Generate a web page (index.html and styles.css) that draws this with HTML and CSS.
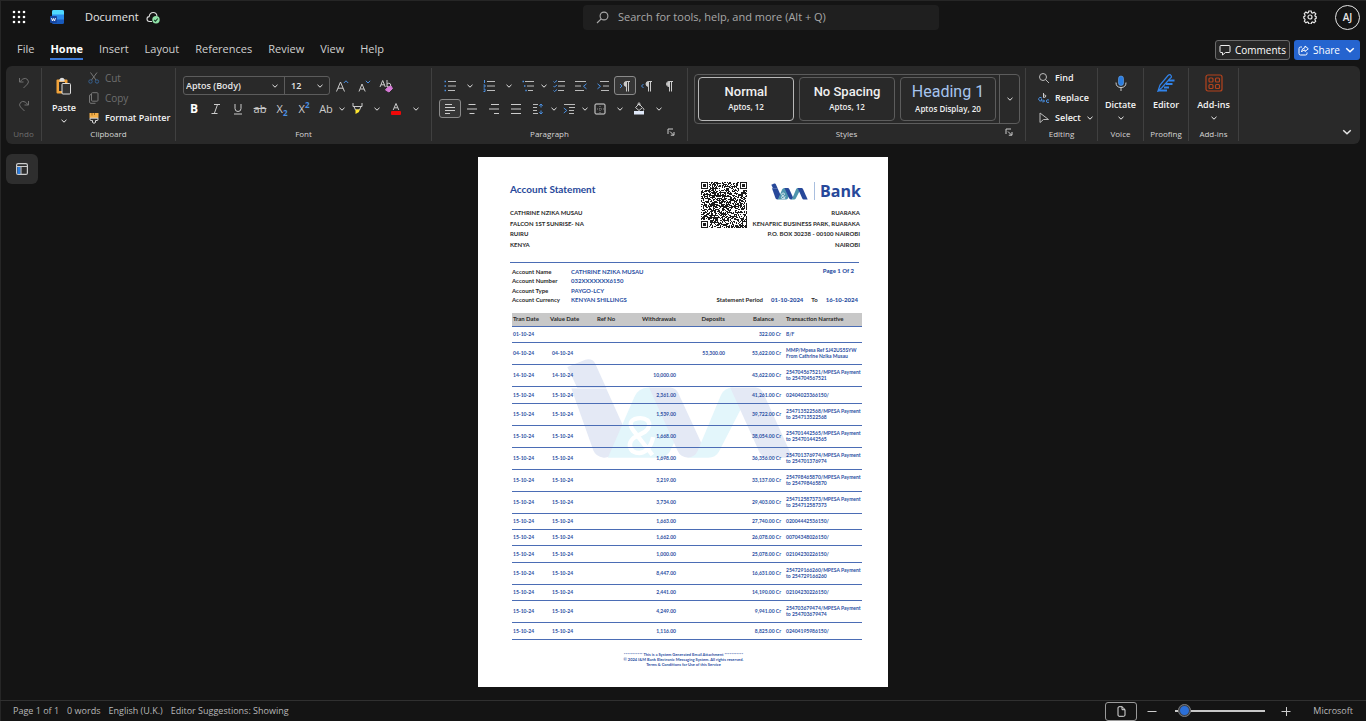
FILE: index.html
```html
<!DOCTYPE html>
<html lang="en">
<head>
<meta charset="utf-8">
<meta name="viewport" content="width=device-width, initial-scale=1">
<title>Document</title>
<link rel="stylesheet" href="styles.css">
</head>
<body>
<svg class="defs" aria-hidden="true">
  <symbol id="chev" viewBox="0 0 8 8"><path d="M1.5 2.8 4 5.2 6.5 2.8" fill="none" stroke="currentColor" stroke-width="1"/></symbol>
  <symbol id="launch" viewBox="0 0 8 8"><path d="M1 6V1h5M3 3.5v0l3.5 3.5M7 4v3.2H3.8" fill="none" stroke="currentColor"/></symbol>
  <symbol id="imark" viewBox="260 155 690 310">
    <path class="m-dark" d="M266 185 320 163Q342 158 350 175L383 248H296Z"/>
    <path class="m-dark" d="M278 250H383L435 365 405 445Q395 459 375 458 352 456 344 436Z"/>
    <path class="m-light" d="M388 458 468 275Q480 248 510 247 530 248 540 262L594 400 574 440Q564 458 540 458Z"/>
    <path class="m-dark" d="M512 247H575Q592 248 600 264L672 420 662 440Q652 458 630 458 606 456 598 438Z"/>
    <path class="m-light" d="M628 458Q650 456 658 438L728 270Q738 248 765 247L794 300 722 440Q712 458 690 458Z"/>
    <path class="m-dark" d="M756 247H832Q848 248 856 264L944 458H868Q852 458 844 442Z"/>
    <path class="m-amp" d="M522 450 466 378Q446 352 468 342 492 334 508 346 520 362 500 380L466 398Q444 418 462 438 486 452 506 434 520 418 524 396" fill="none" stroke-width="13"/>
  </symbol>
</svg>
<div class="app">
  <header class="topbar">
    <div class="brand">
      <button class="plain" aria-label="App launcher"><svg width="14" height="14" viewBox="0 0 14 14" fill="#fff"><circle cx="2" cy="2" r="1.3"/><circle cx="7" cy="2" r="1.3"/><circle cx="12" cy="2" r="1.3"/><circle cx="2" cy="7" r="1.3"/><circle cx="7" cy="7" r="1.3"/><circle cx="12" cy="7" r="1.3"/><circle cx="2" cy="12" r="1.3"/><circle cx="7" cy="12" r="1.3"/><circle cx="12" cy="12" r="1.3"/></svg></button>
      <svg class="word" width="14" height="14" viewBox="0 0 14 14"><rect x="2" y="0" width="12" height="14" rx="1.5" fill="#185abd"/><path d="M2 5V1.5Q2 0 3.500 0H12.500Q14 0 14 1.500V5Z" fill="#50d9ff"/><path d="M2 4.500H14V9.500H2Z" fill="#2b8cec"/><rect x="0" y="6" width="7" height="7" rx="1" fill="#1746a0"/><path d="M1.500 8 2.500 11 3.500 8.500 4.500 11 5.500 8" fill="none" stroke="#fff" stroke-width=".9"/></svg>
      <span class="doc-name">Document</span>
      <svg width="14" height="13" viewBox="0 0 14 13"><path d="M6 10.500H3.500Q1 10.300 1 8 1 5.800 3.200 5.600 3.700 1.500 7.200 1.500 10.500 1.500 11 5.200" fill="none" stroke="#ddd" stroke-width="1.100"/><circle cx="10" cy="8.800" r="3.700" fill="#8fe0a6"/><path d="M8.200 9 9.500 10.200 11.800 7.500" fill="none" stroke="#17402a" stroke-width="1.100"/></svg>
    </div>
    <label class="search"><svg width="13" height="13" viewBox="0 0 13 13" fill="none" stroke="#aaa" stroke-width="1.1"><circle cx="8" cy="5" r="3.900"/><path d="M5.200 7.800 1 12"/></svg><input type="text" aria-label="Search" placeholder="Search for tools, help, and more (Alt + Q)"></label>
    <div class="account">
      <button class="plain" aria-label="Settings"><svg width="14" height="14" viewBox="0 0 14 14" fill="none" stroke="#e6e6e6" stroke-width="1.200"><path d="M5.800 1h2.400l.4 1.700 1 .4 1.500-.9 1.700 1.700-.9 1.500.4 1 .9.300v1.600l-1 .5-.3.900.8 1.500-1.600 1.600-1.500-.8-1 .4-.4 1.600H5.800l-.4-1.600-1-.4-1.500.8-1.600-1.600.8-1.500-.4-.9L.800 8.200V6.600l1-.4.300-1-.8-1.500 1.600-1.600 1.500.9 1-.4Z"/><circle cx="7" cy="7" r="2"/></svg></button>
      <button class="avatar">AJ</button>
    </div>
  </header>

  <nav class="tabs">
    <a href="#">File</a><a href="#" class="on">Home</a><a href="#">Insert</a><a href="#">Layout</a><a href="#">References</a><a href="#">Review</a><a href="#">View</a><a href="#">Help</a>
    <div class="actions">
      <button class="comments"><svg width="12" height="12" viewBox="0 0 12 12" fill="none" stroke="#eee"><path d="M2 1.500h8q1 0 1 1v5q0 1-1 1H6.500L3.500 11V8.500H2q-1 0-1-1v-5q0-1 1-1Z"/></svg>Comments</button>
      <button class="share"><svg width="11" height="11" viewBox="0 0 11 11" fill="none" stroke="#fff"><path d="M4 2H2.500Q1 2 1 3.500v5Q1 10 2.500 10h5Q9 10 9 8.500V7.500M7 1l3.300 2.800L7 6.500V5Q4.500 5 3.500 7 3.700 3 7 2.600Z"/></svg>Share<svg class="chev12"><use href="#chev"/></svg></button>
    </div>
  </nav>

  <section class="ribbon" aria-label="Home">
    <div class="group g-undo">
      <div class="undo">
        <button class="plain" aria-label="Undo"><svg width="12" height="12" viewBox="0 0 12 12" fill="none" stroke="#707070"><path d="M1.500 1v4h4M1.800 4.800 4.800 2Q7.500.5 9.500 2.500q2 2.500 0 4.500L5.500 11"/></svg></button>
        <button class="plain" aria-label="Redo"><svg width="12" height="12" viewBox="0 0 12 12" fill="none" stroke="#707070"><path d="M10.500 1v4h-4M10.200 4.800 7.200 2Q4.500.5 2.500 2.500q-2 2.500 0 4.500L6.500 11"/></svg></button>
      </div>
      <div class="glabel dim">Undo</div>
    </div>
    <div class="group g-clip">
      <div class="clip">
        <button class="big"><svg width="18" height="18" viewBox="0 0 18 18"><rect x="1.500" y="2.500" width="11" height="14" rx="1" fill="#f2a33a"/><path d="M4.500 4.500V2.500Q5 .8 7 .8t2.500 1.700v2Z" fill="#ddd"/><rect x="4" y="5" width="6" height="9" fill="#292929"/><rect x="7" y="6.500" width="8.500" height="10.500" rx="1" fill="#333" stroke="#ddd"/></svg><span>Paste</span><svg class="chev8"><use href="#chev"/></svg></button>
        <div class="clip-list">
          <button class="item dim"><svg width="12" height="12" viewBox="0 0 12 12" fill="none" stroke="#777"><path d="M2.500.5 8 8M9 .5 3.500 8"/><g stroke="#38618f"><circle cx="2.500" cy="9.500" r="1.700"/><circle cx="9" cy="9.500" r="1.700"/></g></svg>Cut</button>
          <button class="item dim"><svg width="12" height="12" viewBox="0 0 12 12" fill="none" stroke="#777"><rect x="3.500" y=".7" width="6.500" height="8.500" rx="1"/><path d="M3 2.500Q1.500 2.500 1.500 4v6q0 1.300 1.500 1.300h4.500"/></svg>Copy</button>
          <button class="item bold"><svg width="12" height="12" viewBox="0 0 12 12"><path d="M1.500 1h9v5h-9Z" fill="#f5b04a"/><path d="M4 1v2.500M6.500 1v2" stroke="#8a5a18" stroke-width=".8"/><path d="M2 6.200V7.500Q2 8.500 3.200 8.500H4.500V10.500Q6 12 7.500 10.500V8.500H9Q10 8.500 10 7.500V6.200Z" fill="none" stroke="#ddd"/></svg>Format Painter</button>
        </div>
      </div>
      <div class="glabel">Clipboard</div>
    </div>
    <div class="group g-font">
      <div class="rows">
        <div class="row">
          <div class="combos">
            <div class="combo c-name"><select aria-label="Font"><option>Aptos (Body)</option></select><svg class="chev8"><use href="#chev"/></svg></div>
            <div class="combo c-size"><select aria-label="Font size"><option>12</option></select><svg class="chev8"><use href="#chev"/></svg></div>
          </div>
          <button class="ib" aria-label="Grow font"><svg width="14" height="14" viewBox="0 0 14 14" fill="none" stroke="#ccc"><path d="M1.500 12.500 5.500 3l4 9.500M3 9.200h5"/><path d="M8.800 4 11 1.800 13.200 4" stroke="#4a90e2"/></svg></button>
          <button class="ib" aria-label="Shrink font"><svg width="14" height="14" viewBox="0 0 14 14" fill="none" stroke="#ccc"><path d="M2 12.500 5 5l3.200 7.500M3.300 10h3.700"/><path d="M8.800 1.800 11 4l2.200-2.200" stroke="#4a90e2"/></svg></button>
          <button class="ib" aria-label="Clear formatting"><svg width="14" height="14" viewBox="0 0 14 14" fill="none" stroke="#ccc"><path d="M1 8 3.700 1.500 6.300 8M2 5.800h3.500M8 1v7M8 5q2-1.800 3.500 0 .8 2.500-1 3-1.500.2-2.500-1"/><path d="M8.500 8.500 12 7l1.500 2.500L10 13 6.500 11Z" fill="#d67ad6" stroke="#d67ad6"/></svg></button>
        </div>
        <div class="row">
          <button class="ib t-b">B</button>
          <button class="ib" aria-label="Italic"><svg width="12" height="12" viewBox="0 0 12 12" fill="none" stroke="#ccc"><path d="M4 1.500h6M1.500 10.500h6M7.500 1.500 4.300 10.500"/></svg></button>
          <button class="ib" aria-label="Underline"><svg width="12" height="12" viewBox="0 0 12 12" fill="none" stroke="#ccc"><path d="M3 1v4.500Q3 8.500 6 8.500T9 5.500V1M2 11h8"/></svg></button>
          <button class="ib t-s">ab</button>
          <button class="ib t-x">X<sub>2</sub></button>
          <button class="ib t-x">X<sup>2</sup></button>
          <button class="ib t-n">Ab</button><button class="cv n" aria-label="Change case"><svg class="chev8"><use href="#chev"/></svg></button>
          <button class="ib" aria-label="Highlight"><svg width="13" height="13" viewBox="0 0 13 13"><path d="M2 1v3.500h9V1M3 4.500 4.500 8h4L10 4.500" fill="none" stroke="#ccc"/><path d="M4.500 7.500h4.200L8 10l-3.500 2Z" fill="#ffe62e"/></svg></button><button class="cv" aria-label="Highlight colours"><svg class="chev8"><use href="#chev"/></svg></button>
          <button class="ib" aria-label="Font colour"><svg width="12" height="13" viewBox="0 0 12 13"><path d="M3.200 8 6 1.500 8.800 8M4.200 5.800h3.600" fill="none" stroke="#ccc"/><rect x="1" y="9" width="10" height="4" rx="1" fill="#f00808"/></svg></button><button class="cv" aria-label="Font colours"><svg class="chev8"><use href="#chev"/></svg></button>
        </div>
      </div>
      <div class="glabel">Font</div>
    </div>
    <div class="group g-para">
      <div class="rows">
        <div class="row">
          <button class="ib" aria-label="Bullets"><svg width="12" height="12" viewBox="0 0 12 12" stroke="#bbb" fill="none"><path d="M4 1.500h8M4 6h8M4 10.500h7"/><path d="M.500 1.500h1.500M.500 6h1.500M.500 10.500h1.500" stroke="#4a90e2" stroke-width="1.500"/></svg></button><button class="cv" aria-label="Bullet styles"><svg class="chev8"><use href="#chev"/></svg></button>
          <button class="ib" aria-label="Numbering"><svg width="12" height="12" viewBox="0 0 12 12" stroke="#bbb" fill="none"><path d="M4 1.500h8M4 6h8M4 10.500h8"/><path d="M1.500 0v3M.5 5h1.500v2H.5M.5 9h1.500v2.500H.5" stroke="#4a90e2"/></svg></button><button class="cv" aria-label="Numbering styles"><svg class="chev8"><use href="#chev"/></svg></button>
          <button class="ib" aria-label="Multilevel list"><svg width="12" height="12" viewBox="0 0 12 12" stroke="#bbb" fill="none"><path d="M3 1.500h9M5 6h7M6 10.500h5"/><path d="M.5 1.500h1.500M2 6h1.500M3.300 10.500h1.500" stroke="#4a90e2" stroke-width="1.500"/></svg></button><button class="cv n" aria-label="Multilevel styles"><svg class="chev8"><use href="#chev"/></svg></button>
          <button class="ib" aria-label="Checklist"><svg width="12" height="12" viewBox="0 0 12 12" stroke="#bbb" fill="none"><path d="M5 1.500h7M5 6h7M5 10.500h6"/><path d="m.5 1.500 1 1L4 .5M.5 6l1 1L4 5M.5 10.500l1 1 2.500-2" stroke="#4a90e2"/></svg></button>
          <button class="ib" aria-label="Decrease indent"><svg width="12" height="12" viewBox="0 0 12 12" stroke="#bbb" fill="none"><path d="M0 1.500h11M0 6h6M0 10.500h9"/><path d="M11.500 3.800 8.500 6.300l3 2.500" stroke="#4a90e2"/></svg></button>
          <button class="ib" aria-label="Increase indent"><svg width="12" height="12" viewBox="0 0 12 12" stroke="#bbb" fill="none"><path d="M3 1.500h9M6 6h6M4 10.500h8"/><path d="M.5 3.800 3.500 6.300l-3 2.500" stroke="#4a90e2"/></svg></button>
          <button class="ib sel" aria-label="Left to right"><svg width="12" height="12" viewBox="0 0 12 12" stroke="#ccc" fill="none"><path d="M11 1.500H7.500Q5 1.500 5 4t3 2.500M7.500 1.500v10M9.500 1.500v10"/><path d="M6.500 2h1v4h-1Q5.500 5 5.500 4t1-2Z" fill="#ccc"/><path d="m1 4 2 2-2 2" stroke="#4a90e2"/></svg></button>
          <button class="ib" aria-label="Right to left"><svg width="12" height="12" viewBox="0 0 12 12" stroke="#ccc" fill="none"><path d="M11 1.500H7.500Q5 1.500 5 4t3 2.500M7.500 1.500v10M9.500 1.500v10"/><path d="M6.500 2h1v4h-1Q5.500 5 5.500 4t1-2Z" fill="#ccc"/><path d="m2.500 4-2 2 2 2" stroke="#4a90e2"/></svg></button>
          <button class="ib" aria-label="Show marks"><svg width="12" height="12" viewBox="0 0 12 12" stroke="#ccc" fill="none"><path d="M10 1.500H6Q3.500 1.500 3.500 4T6 6.500M6.500 1.500v10M8.500 1.500v10"/><path d="M5.500 2h1v4h-1Q4.500 5 4.500 4t1-2Z" fill="#ccc"/></svg></button>
        </div>
        <div class="row">
          <button class="ib sel" aria-label="Align left"><svg width="12" height="12" viewBox="0 0 12 12" stroke="#ccc"><path d="M1 1.500h7M1 4.500h10M1 7.500h10M1 10.500h5"/></svg></button>
          <button class="ib" aria-label="Centre"><svg width="12" height="12" viewBox="0 0 12 12" stroke="#ccc"><path d="M2.500 1.500h7M1 6h10M3.500 10.500h5"/></svg></button>
          <button class="ib" aria-label="Align right"><svg width="12" height="12" viewBox="0 0 12 12" stroke="#ccc"><path d="M3 1.500h8M1 6h10M6 10.500h5"/></svg></button>
          <button class="ib" aria-label="Justify"><svg width="12" height="12" viewBox="0 0 12 12" stroke="#ccc"><path d="M1 1.500h10M1 6h10M1 10.500h10"/></svg></button>
          <button class="ib" aria-label="Line spacing"><svg width="12" height="12" viewBox="0 0 12 12" stroke="#bbb" fill="none"><path d="M1 1.500h5M1 4.500h4M1 7.500h4M1 10.500h5"/><path d="M9 1v3.500M7.300 2.700 9 1l1.700 1.700M9 11V7.500M7.300 9.300 9 11l1.700-1.700" stroke="#4a90e2"/></svg></button><button class="cv n" aria-label="Spacing options"><svg class="chev8"><use href="#chev"/></svg></button>
          <button class="ib" aria-label="Special indent"><svg width="12" height="12" viewBox="0 0 12 12" stroke="#bbb" fill="none"><path d="M1 1.500h11M6 4.500h6M6 7.500h5M6 10.500h5"/><path d="m.8 5 3 2.500-3 2.500" stroke="#4a90e2"/></svg></button><button class="cv n" aria-label="Indent options"><svg class="chev8"><use href="#chev"/></svg></button>
          <button class="ib" aria-label="Borders"><svg width="12" height="12" viewBox="0 0 12 12" fill="none"><rect x="1" y="1" width="10" height="10" rx="1" stroke="#ddd"/><path d="M6 1v10M1 6h10" stroke="#888" stroke-dasharray="1 1"/></svg></button><button class="cv" aria-label="Border styles"><svg class="chev8"><use href="#chev"/></svg></button>
          <button class="ib" aria-label="Shading"><svg width="12" height="13" viewBox="0 0 12 13" fill="none" stroke="#ccc"><path d="M2.500 5.500 6 2l3.500 3.500L6 8.500ZM5 3V1.500Q6 0 7 1.500V4M10 6q1.500 1.500.5 2.500"/><rect x="1.500" y="9.500" width="9" height="2.500" fill="#dfe8f8" stroke="#dfe8f8"/></svg></button><button class="cv" aria-label="Shading colours"><svg class="chev8"><use href="#chev"/></svg></button>
        </div>
      </div>
      <div class="glabel with-launch"><span>Paragraph</span><button class="plain" aria-label="Paragraph settings"><svg class="launch"><use href="#launch"/></svg></button></div>
    </div>
    <div class="group g-styles">
      <div class="gallery">
        <button class="card on"><span class="s-name">Normal</span><span class="s-font">Aptos, 12</span></button>
        <button class="card"><span class="s-name">No Spacing</span><span class="s-font">Aptos, 12</span></button>
        <button class="card"><span class="s-name s-head">Heading 1</span><span class="s-font">Aptos Display, 20</span></button>
        <button class="more" aria-label="More styles"><svg class="chev8"><use href="#chev"/></svg></button>
      </div>
      <div class="glabel with-launch"><span>Styles</span><button class="plain" aria-label="Style settings"><svg class="launch"><use href="#launch"/></svg></button></div>
    </div>
    <div class="group g-edit">
      <div class="edit-list">
        <button class="item bold"><svg width="12" height="12" viewBox="0 0 12 12" fill="none" stroke="#bbb"><circle cx="5" cy="5" r="3.500"/><path d="m7.500 7.500 3.500 3.500"/></svg>Find</button>
        <button class="item bold"><svg width="12" height="12" viewBox="0 0 12 12" fill="none" stroke="#4a90e2"><path d="M5.500 1v4.500M5.500 3.500q1-1 2.300 0 .5 2-2.300 2" stroke="#ccc"/><path d="M3.500 5.500H1.500Q.5 6 .8 8q1 2 2.700.5V6.500M3.500 9h3M5 7.500 6.500 9 5 10.500M11 8q-2.500-1-2.700 1 .2 2.300 2.700 1.300"/></svg>Replace</button>
        <button class="item bold"><svg width="12" height="12" viewBox="0 0 12 12" fill="none" stroke="#bbb"><path d="M2 1v9.500L5.500 7.500h5Z"/></svg>Select<svg class="chev8"><use href="#chev"/></svg></button>
      </div>
      <div class="glabel">Editing</div>
    </div>
    <div class="group g-voice">
      <button class="big"><svg width="18" height="18" viewBox="0 0 18 18" fill="none"><rect x="6.500" y="2" width="5" height="9.500" rx="2.500" fill="#2b7de0" stroke="#6aa8f0" stroke-width=".6"/><path d="M4 8.500q0 5 5 5t5-5M9 13.500V17" stroke="#ccc"/></svg><span>Dictate</span><svg class="chev8"><use href="#chev"/></svg></button>
      <div class="glabel">Voice</div>
    </div>
    <div class="group g-proof">
      <button class="big"><svg width="20" height="18" viewBox="0 0 20 18" fill="none" stroke="#3183ea"><path d="M2 17 4 11 12 1.500Q14-.3 15 1.500T14.500 4L6 13.500Z" stroke-width="1.200"/><path d="M12.500 6.500h6M10 10h6.500M8 13.500h5M2 16.500h9" stroke-width="2"/></svg><span>Editor</span></button>
      <div class="glabel">Proofing</div>
    </div>
    <div class="group g-add">
      <button class="big"><svg width="18" height="18" viewBox="0 0 18 18" fill="none" stroke="#b5431d" stroke-width="1.200"><rect x="1" y="1" width="16" height="16" rx="2"/><rect x="4" y="4" width="4" height="4" rx="1"/><rect x="10.500" y="4" width="4" height="4" rx="1"/><rect x="4" y="10.500" width="4" height="4" rx="1"/><rect x="10.500" y="10.500" width="4" height="4" rx="1"/></svg><span>Add-ins</span><svg class="chev8"><use href="#chev"/></svg></button>
      <div class="glabel">Add-ins</div>
    </div>
    <button class="plain collapse" aria-label="Collapse ribbon"><svg class="chev12"><use href="#chev"/></svg></button>
  </section>

  <main class="canvas">
    <button class="pane" aria-label="Navigation pane"><svg width="12" height="12" viewBox="0 0 12 12" fill="none"><rect x=".6" y=".6" width="10.800" height="10.800" rx="1.500" stroke="#ccc" stroke-width="1.200"/><path d="M1 3.500h10" stroke="#ccc"/><rect x="1.500" y="4" width="3" height="7" fill="#2b7de0"/><path d="M5 4v7" stroke="#ccc"/></svg></button>
    <article class="page">
      <svg class="watermark" aria-hidden="true"><use href="#imark"/></svg>
      <div class="head">
        <div class="head-l">
          <h1>Account Statement</h1>
          <div class="addr"><span>CATHRINE NZIKA MUSAU</span><span>FALCON 1ST SUNRISE- NA</span><span>RUIRU</span><span>KENYA</span></div>
        </div>
        <svg class="qr" id="qr" viewBox="0 0 46 46" shape-rendering="crispEdges" role="img" aria-label="QR code"></svg>
        <div class="head-r">
          <div class="logo"><svg class="mark"><use href="#imark"/></svg><span>Bank</span></div>
          <div class="addr"><span>RUARAKA</span><span>KENAFRIC BUSINESS PARK, RUARAKA</span><span>P.O. BOX 30238 - 00100 NAIROBI</span><span>NAIROBI</span></div>
        </div>
      </div>
      <div class="info">
        <dl><dt>Account Name</dt><dd>CATHRINE NZIKA MUSAU</dd><dt>Account Number</dt><dd>032XXXXXXX6150</dd><dt>Account Type</dt><dd>PAYGO-LCY</dd><dt>Account Currency</dt><dd>KENYAN SHILLINGS</dd></dl>
        <div class="period"><b>Page 1 Of 2</b><p><span>Statement Period</span><b>01-10-2024</b><span>To</span><b>16-10-2024</b></p></div>
      </div>
      <table class="tx">
        <colgroup><col class="k1"><col class="k2"><col class="k3"><col class="k4"><col class="k5"><col class="k6"><col></colgroup>
        <thead><tr><th>Tran Date</th><th>Value Date</th><th>Ref No</th><th class="r">Withdrawals</th><th class="r">Deposits</th><th class="r bal">Balance</th><th class="nar">Transaction Narrative</th></tr></thead>
        <tbody>
          <tr><td>01-10-24</td><td></td><td></td><td class="r"></td><td class="r"></td><td class="r">322.00 Cr</td><td class="nar">B/F</td></tr>
          <tr class="tall"><td>04-10-24</td><td class="v">04-10-24</td><td></td><td class="r"></td><td class="r">53,300.00</td><td class="r">53,622.00 Cr</td><td class="nar">MMP/Mpesa Ref SJ42US5SYW<br>From Cathrine Nzika Musau</td></tr>
          <tr class="tall"><td>14-10-24</td><td class="v">14-10-24</td><td></td><td class="r">10,000.00</td><td></td><td class="r">43,622.00 Cr</td><td class="nar">254704567521/MPESA Payment<br>to 254704567521</td></tr>
          <tr><td>15-10-24</td><td class="v">15-10-24</td><td></td><td class="r">2,361.00</td><td></td><td class="r">41,261.00 Cr</td><td class="nar">02404023366150/</td></tr>
          <tr class="tall"><td>15-10-24</td><td class="v">15-10-24</td><td></td><td class="r">1,539.00</td><td></td><td class="r">39,722.00 Cr</td><td class="nar">254713522568/MPESA Payment<br>to 254713522568</td></tr>
          <tr class="tall"><td>15-10-24</td><td class="v">15-10-24</td><td></td><td class="r">1,668.00</td><td></td><td class="r">38,054.00 Cr</td><td class="nar">254701442565/MPESA Payment<br>to 254701442565</td></tr>
          <tr class="tall"><td>15-10-24</td><td class="v">15-10-24</td><td></td><td class="r">1,698.00</td><td></td><td class="r">36,356.00 Cr</td><td class="nar">254701376974/MPESA Payment<br>to 254701376974</td></tr>
          <tr class="tall"><td>15-10-24</td><td class="v">15-10-24</td><td></td><td class="r">3,219.00</td><td></td><td class="r">33,137.00 Cr</td><td class="nar">254798465870/MPESA Payment<br>to 254798465870</td></tr>
          <tr class="tall"><td>15-10-24</td><td class="v">15-10-24</td><td></td><td class="r">3,734.00</td><td></td><td class="r">29,403.00 Cr</td><td class="nar">254712587373/MPESA Payment<br>to 254712587373</td></tr>
          <tr><td>15-10-24</td><td class="v">15-10-24</td><td></td><td class="r">1,663.00</td><td></td><td class="r">27,740.00 Cr</td><td class="nar">02004442536150/</td></tr>
          <tr><td>15-10-24</td><td class="v">15-10-24</td><td></td><td class="r">1,662.00</td><td></td><td class="r">26,078.00 Cr</td><td class="nar">00704348026150/</td></tr>
          <tr><td>15-10-24</td><td class="v">15-10-24</td><td></td><td class="r">1,000.00</td><td></td><td class="r">25,078.00 Cr</td><td class="nar">02104230226150/</td></tr>
          <tr class="tall"><td>15-10-24</td><td class="v">15-10-24</td><td></td><td class="r">8,447.00</td><td></td><td class="r">16,631.00 Cr</td><td class="nar">254729166260/MPESA Payment<br>to 254729166260</td></tr>
          <tr><td>15-10-24</td><td class="v">15-10-24</td><td></td><td class="r">2,441.00</td><td></td><td class="r">14,190.00 Cr</td><td class="nar">02104230226150/</td></tr>
          <tr class="tall"><td>15-10-24</td><td class="v">15-10-24</td><td></td><td class="r">4,249.00</td><td></td><td class="r">9,941.00 Cr</td><td class="nar">254703679474/MPESA Payment<br>to 254703679474</td></tr>
          <tr><td>15-10-24</td><td class="v">15-10-24</td><td></td><td class="r">1,116.00</td><td></td><td class="r">8,825.00 Cr</td><td class="nar">02404195986150/</td></tr>
        </tbody>
      </table>
      <footer class="foot">*********** This is a System Generated Email Attachment ***********<br>© 2024 I&amp;M Bank Electronic Messaging System. All rights reserved.<br>Terms &amp; Conditions for Use of this Service</footer>
    </article>
  </main>

  <footer class="status">
    <span>Page 1 of 1</span><span>0 words</span><span>English (U.K.)</span><span>Editor Suggestions: Showing</span>
    <div class="zoom">
      <button class="view" aria-label="Page view"><svg width="9" height="11" viewBox="0 0 9 11" fill="none" stroke="#ddd"><path d="M2 .7h3L8 3.500V9q0 1.300-1.200 1.300H2Q1 10.300 1 9V2Q1 .7 2 .7ZM5 .7v3h3"/></svg></button>
      <button class="plain" aria-label="Zoom out"><svg width="10" height="10" viewBox="0 0 10 10" stroke="#ccc"><path d="M.5 5.500h9"/></svg></button>
      <input type="range" min="0" max="100" value="4" aria-label="Zoom">
      <button class="plain" aria-label="Zoom in"><svg width="10" height="10" viewBox="0 0 10 10" stroke="#ccc"><path d="M.5 5.500h9M5.500 1v9"/></svg></button>
      <span class="ms">Microsoft</span>
    </div>
  </footer>
</div>
<script src="qr.js"></script>
</body>
</html>
```

FILE: styles.css
```css
* { box-sizing: border-box; }
body {
  margin: 0;
  background: #141414;
  color: #e6e6e6;
  font: 11px/14px "Open Sans", "Noto Sans", sans-serif;
}
button, input, select { font: inherit; color: inherit; }
button { background: none; border: 0; padding: 0; display: flex; align-items: center; justify-content: center; }
svg { display: block; flex: none; }
.defs { position: absolute; width: 0; height: 0; }
.app { min-height: 100vh; display: flex; flex-direction: column; box-shadow: inset 1px 1px #262626; }
.chev8 { width: 8px; height: 8px; }
.chev12 { width: 12px; height: 12px; }
.launch { width: 8px; height: 8px; color: #ccc; }

/* title bar */
.topbar { display: grid; grid-template-columns: 583fr 356fr 427fr; align-items: center; height: 34px; }
.brand { display: flex; align-items: center; padding-left: 12px; }
.word { margin: 0 21px 0 24px; }
.doc-name { margin-right: 7px; }
.search { display: flex; align-items: center; gap: 9px; height: 25px; padding: 0 13px; border-radius: 4px; background: #1f1f1f; }
.search input { flex: 1; min-width: 0; padding: 0; border: 0; outline: 0; background: none; }
.search input::placeholder { color: #a8a8a8; opacity: 1; }
.account { display: flex; justify-content: flex-end; align-items: center; gap: 18px; padding-right: 6px; }
.avatar { width: 25px; height: 25px; border: 1px solid #e6e6e6; border-radius: 50%; font-weight: 600; font-size: 10px; }

/* tabs */
.tabs { display: flex; align-items: center; gap: 16px; height: 32px; padding: 0 6px 0 17px; }
.tabs a { color: #d0d0d0; text-decoration: none; padding: 2px 0; border-bottom: 2px solid transparent; }
.tabs .on { color: #fff; font-weight: 700; border-color: #3a78d6; }
.actions { display: flex; gap: 4px; margin-left: auto; font-size: 10px; }
.actions button { height: 20px; border-radius: 3px; gap: 4px; color: #fff; }
.comments { width: 75px; border: 1px solid #6a6a6a; background: #262626; }
.share { width: 66px; background: #2564cf; }

/* ribbon */
.ribbon { display: flex; height: 78px; margin: 0 6px; border-radius: 6px; background: #292929; }
.group { display: flex; flex-direction: column; justify-content: space-between; margin: 2px 0 3px; padding-bottom: 1px; border-right: 1px solid #404040; flex: none; }
.glabel { text-align: center; font-size: 8px; line-height: 12px; color: #d6d6d6; }
.dim { color: #6e6e6e; }
.item.bold { font-weight: 600; font-size: 9px; color: #f4f4f4; }
.with-launch { display: flex; }
.with-launch span { flex: 1; }
.with-launch button { width: 20px; justify-content: flex-start; align-items: flex-start; }
.g-undo { width: 36px; }
.g-clip { width: 134px; }
.g-font, .g-para { width: 256px; }
.g-styles { width: 338px; }
.g-edit { width: 72px; }
.g-voice { width: 46px; }
.g-proof { width: 45px; }
.g-add { width: 50px; }
.undo { display: flex; flex-direction: column; align-items: center; gap: 11px; padding-top: 9px; }
.clip { display: flex; padding-left: 10px; }
.clip-list, .edit-list { display: flex; flex-direction: column; padding-left: 12px; }
.item { justify-content: flex-start; gap: 5px; height: 20px; font-size: 10px; white-space: nowrap; }
.big { flex-direction: column; gap: 4px; font-size: 9px; font-weight: 600; padding-top: 6px; color: #f4f4f4; }
.big svg + span { line-height: 14px; padding-top: 2px; }
.big .chev8 { margin-top: -2px; }
.rows { display: flex; flex-direction: column; gap: 4px; padding: 8px 0 0 7px; }
.row { display: flex; height: 19px; }
.ib { width: 22px; border: 1px solid transparent; border-radius: 3px; color: #ccc; }
.ib.sel { border-color: #8a8a8a; background: #363636; }
.cv { width: 17px; }
.cv.n { width: 9px; }
.t-b { font-weight: 700; font-size: 12px; color: #fff; }
.t-s { text-decoration: line-through; }
.ib sub, .ib sup { font-size: 8px; line-height: 9px; font-weight: 700; color: #4a90e2; }
.ib sub { align-self: flex-end; }
.ib sup { align-self: flex-start; }
.combos { display: flex; width: 147px; border: 1px solid #5c5c5c; border-radius: 3px; margin-right: 1px; }
.combo { display: grid; align-items: center; }
.combo > * { grid-area: 1 / 1; }
.combo svg { justify-self: end; margin-right: 5px; pointer-events: none; }
.combo select { appearance: none; width: 100%; height: 100%; padding: 0 2px; border: 0; background: none; font-size: 9px; font-weight: 600; }
.c-name { flex: 1; border-right: 1px solid #5c5c5c; }
.c-size { width: 44px; }
.c-size select { padding-left: 6px; }
.gallery { display: flex; margin: 6px 5px 0 6px; padding: 2px 0 2px 3px; height: 50px; gap: 5px; border: 1px solid #5c5c5c; border-radius: 4px; font-family: Roboto, sans-serif; }
.card { flex: 1; flex-direction: column; border: 1px solid #5c5c5c; border-radius: 4px; color: #f0f0f0; }
.card.on { border-color: #b8b8b8; }
.s-name { font-size: 13px; line-height: 16px; font-weight: 500; }
.s-head { font-size: 16px; line-height: 20px; font-weight: 400; color: #a6c4ee; }
.s-font { font: 600 8px/14px "Open Sans", sans-serif; }
.more { width: 20px; margin: -2px 0 -2px -2px; border-left: 1px solid #5c5c5c; }
.collapse { margin: auto 7px 6px auto; }

/* document area */
.canvas { flex: 1; display: grid; grid-template-columns: 1fr 410px 1fr; align-items: start; padding: 13px 0; }
.pane { width: 32px; height: 30px; margin: -3px 0 0 6px; border-radius: 6px; background: #2e2e2e; }
.page { position: relative; z-index: 0; background: #fff; color: #2a2a2a; padding: 25px 26px 16px 34px; font: 700 6px/8px Lato, sans-serif; min-height: 530px; }
.page h1 { margin: 0; font-size: 10px; line-height: 14px; color: #27489a; }
.page b, .page dd { color: #2b4fa2; }
.head { display: flex; margin: 0 3px 0 -2px; height: 81px; border-bottom: 1px solid #4b6db5; }
.head-l { flex: 1; }
.head-r { width: 112px; }
.qr { width: 46px; height: 46px; }
.addr { display: grid; grid-template-rows: repeat(4, 1fr); align-items: center; height: 42px; margin-top: 12px; white-space: nowrap; }
.head-r .addr { margin-top: 8px; margin-right: -1px; justify-items: end; }
.logo { display: flex; align-items: center; height: 18px; padding-left: 24px; }
.logo .mark { width: 37px; height: 17px; }
.logo span { margin-left: 6px; padding-left: 5px; border-left: 1px solid #a9bfdf; font: 700 16px/18px "Open Sans", sans-serif; color: #27489a; }
.info { display: flex; justify-content: space-between; height: 38px; margin-top: 4px; }
.info dl { display: grid; grid-template-columns: 59px auto; grid-template-rows: repeat(4, 1fr); align-items: center; margin: 0; }
.info dd { margin: 0; }
.period { display: flex; flex-direction: column; justify-content: space-between; align-items: flex-end; padding: 0 4px 1px 0; }
.period > b { padding-right: 4px; }
.period p { margin: 0; display: flex; gap: 8px; }
.tx { width: 100%; margin-top: 8px; border-collapse: collapse; table-layout: fixed; }
.tx th { height: 13px; padding: 0 0 0 1px; background: #c8c8c8; text-align: left; white-space: nowrap; }
.tx th, .tx td { border-bottom: 1px solid #4b6db5; }
.tx td { height: 16px; padding: 0 0 0 1px; font-size: 5px; line-height: 6px; color: #2b4fa2; white-space: nowrap; }
.tx tr:nth-child(4n) td { height: 17px; }
.tx tr.tall td { height: 22px; }
.tx .v { padding-left: 3px; }
.tx .r { text-align: right; }
.tx .bal { padding-right: 7px; }
.tx .nar { padding-left: 5px; }
.k1 { width: 37px; }
.k2 { width: 47px; }
.k3 { width: 32px; }
.k4 { width: 48px; }
.k5 { width: 49px; }
.k6 { width: 56px; }
.foot { margin: 12px 7px 0 0; text-align: center; font-size: 4px; line-height: 5px; color: #2b4fa2; }
.watermark { --dark: #e4e9f5; --light: #e3f6fb; position: absolute; z-index: -1; left: 87px; top: 200px; width: 230px; height: 103px; }
.mark { --dark: #27489a; --light: #4f95ad; }
.m-dark { fill: var(--dark); }
.m-light { fill: var(--light); }
.m-amp { stroke: #fff; }

/* status bar */
.status { display: flex; align-items: center; gap: 8px; height: 21px; padding: 0 13px; border-top: 1px solid #303030; font-size: 9px; color: #b8b8b8; }
.zoom { display: flex; align-items: center; margin-left: auto; }
.view { width: 32px; height: 19px; margin-right: 10px; border: 1px solid #9a9a9a; border-radius: 3px; }
.ms { margin-left: 22px; }
.zoom input { appearance: none; width: 90px; height: 14px; margin: 0 16px 0 18px; background: none; }
.zoom input::-webkit-slider-runnable-track { height: 2px; background: #c8c8c8; }
.zoom input::-webkit-slider-thumb { appearance: none; width: 13px; height: 13px; margin-top: -6px; border: 2px solid #3c4048; outline: 1px solid #777; outline-offset: -1px; border-radius: 50%; background: #2b6fd8; }
```

FILE: qr.js
```js
// Draws the statement's QR symbol as one path of unit modules.
(function () {
  var size = 46, seed = 7, path = '';
  function rand() {
    seed = (seed * 1103515245 + 12345) % 2147483648;
    return seed / 2147483648;
  }
  function finder(x, y) {
    var edge = Math.max(Math.abs(x - 3), Math.abs(y - 3));
    return edge === 3 || edge <= 1;
  }
  for (var y = 0; y < size; y++) {
    for (var x = 0; x < size; x++) {
      var r = rand() < 0.56, on;
      var fx = x < 8 ? x : x >= size - 8 ? size - 1 - x : -1;
      var fy = y < 8 ? y : y >= size - 8 ? size - 1 - y : -1;
      var corner = fx >= 0 && fy >= 0 && !(x >= size - 8 && y >= size - 8);
      on = corner ? finder(fx, fy) : r;
      if (on) path += 'M' + x + ' ' + y + 'h1v1h-1z';
    }
  }
  var el = document.createElementNS('http://www.w3.org/2000/svg', 'path');
  el.setAttribute('d', path);
  el.setAttribute('fill', '#1c1c1c');
  document.getElementById('qr').appendChild(el);
})();
```
